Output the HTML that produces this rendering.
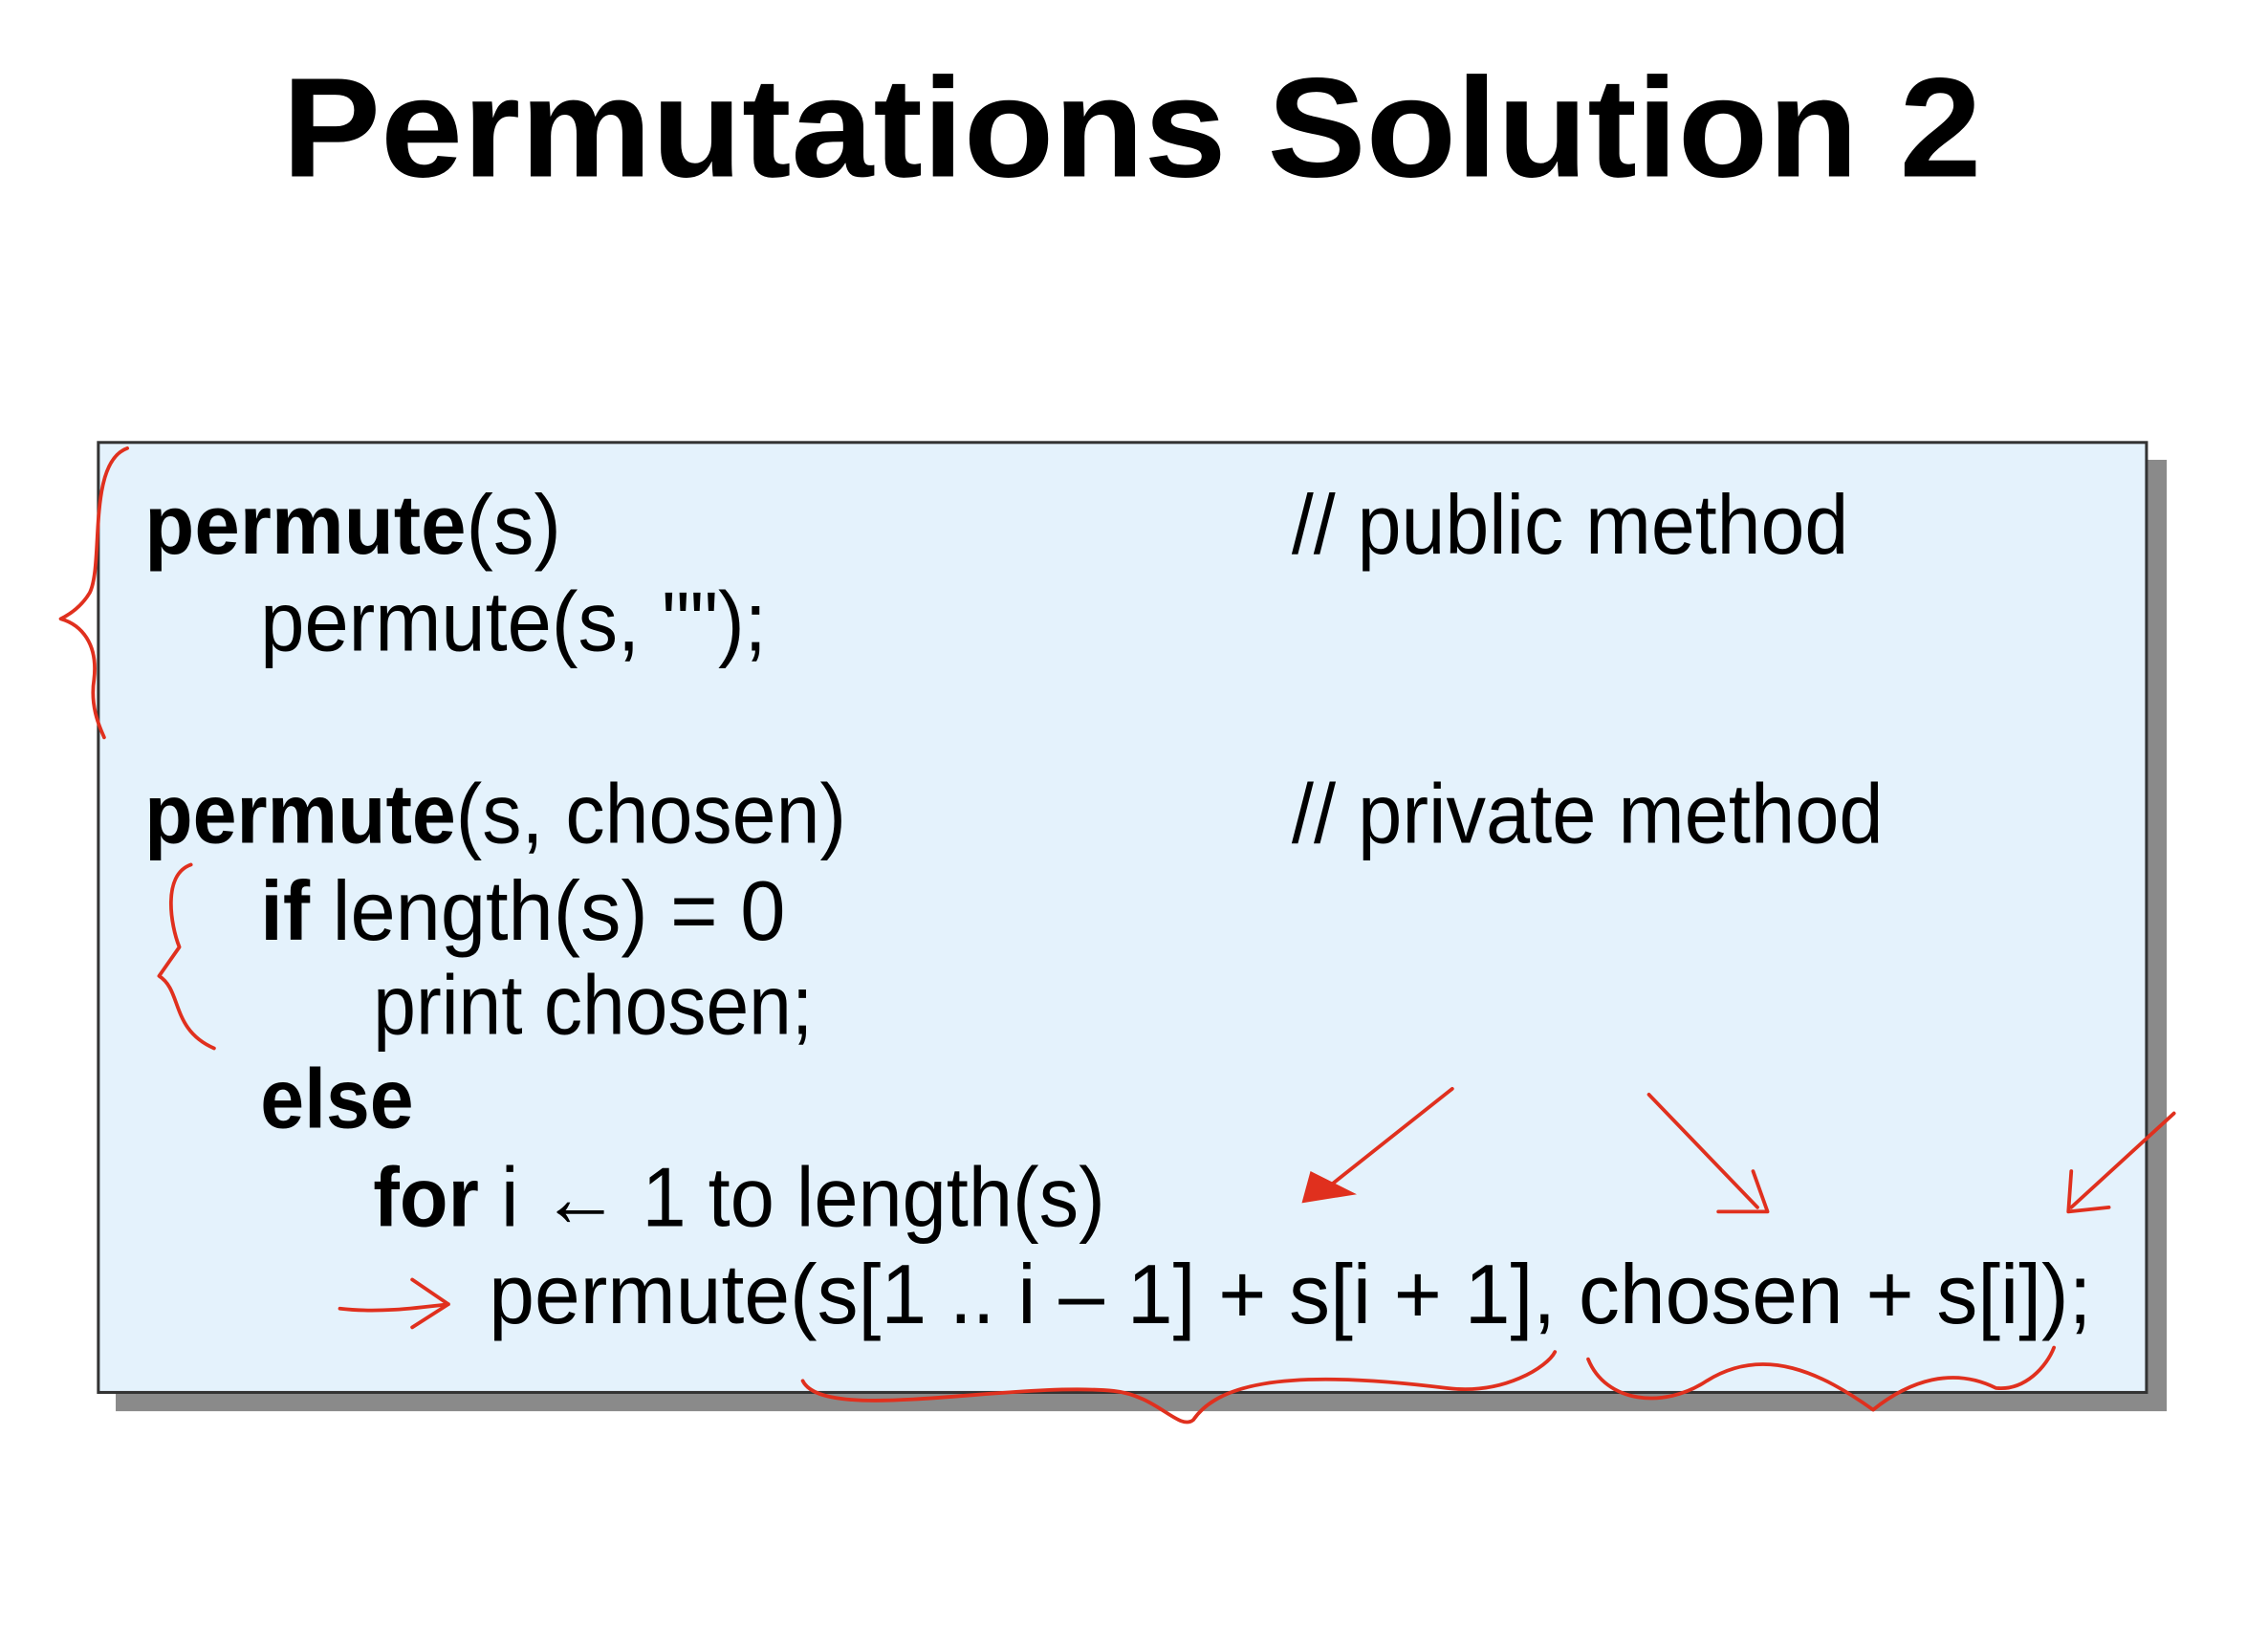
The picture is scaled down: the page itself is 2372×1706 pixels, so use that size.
<!DOCTYPE html>
<html><head><meta charset="utf-8"><style>
html,body{margin:0;padding:0;background:#fff;width:2372px;height:1706px;overflow:hidden}
svg{display:block}
text{font-family:"Liberation Sans",sans-serif;fill:#000}
</style></head><body>
<svg width="2372" height="1706" viewBox="0 0 1568 1128" preserveAspectRatio="none" xmlns="http://www.w3.org/2000/svg">
<rect width="1568" height="1128" fill="#fff"/>
<text x="195" y="122" font-size="98" font-weight="bold" textLength="1175" lengthAdjust="spacingAndGlyphs">Permutations Solution 2</text>
<rect x="80" y="318" width="1418" height="658" fill="#8a8a8a"/>
<rect x="68" y="306" width="1416" height="657" fill="#e4f2fc" stroke="#333" stroke-width="2"/>
<g font-size="58">
<text x="100" y="383" textLength="288" lengthAdjust="spacingAndGlyphs"><tspan font-weight="bold">permute</tspan>(s)</text>
<text x="180" y="450" textLength="350" lengthAdjust="spacingAndGlyphs">permute(s, "");</text>
<text x="893" y="383" textLength="385" lengthAdjust="spacingAndGlyphs">// public method</text>
<text x="100" y="583" textLength="485" lengthAdjust="spacingAndGlyphs"><tspan font-weight="bold">permute</tspan>(s, chosen)</text>
<text x="893" y="583" textLength="409" lengthAdjust="spacingAndGlyphs">// private method</text>
<text x="180" y="650" textLength="363" lengthAdjust="spacingAndGlyphs"><tspan font-weight="bold">if</tspan> length(s) = 0</text>
<text x="258" y="715" textLength="304" lengthAdjust="spacingAndGlyphs">print chosen;</text>
<text x="180" y="780" font-weight="bold" textLength="106" lengthAdjust="spacingAndGlyphs">else</text>
<text x="258" y="848" textLength="506" lengthAdjust="spacingAndGlyphs"><tspan font-weight="bold">for</tspan> i ← 1 to length(s)</text>
<text x="338" y="915" textLength="1108" lengthAdjust="spacingAndGlyphs">permute(s[1 .. i – 1] + s[i + 1], chosen + s[i]);</text>
</g>
<g fill="none" stroke="#e0301e" stroke-width="2.5" stroke-linecap="round" stroke-linejoin="round">
<path d="M88,310 C60,320 72,390 62,410 C56,420 48,425 42,428 C56,432 68,445 65,470 C62,490 70,505 72,510"/>
<path d="M132,598 C112,605 118,640 124,655 L110,675 C126,685 118,712 148,725"/>
<path d="M235,905 C260,908 285,905 310,902 M285,885 L310,902 L285,918"/>
<path d="M1004,753 L912,826"/>
<path d="M1140,757 L1215,835 M1188,838 L1222,838 L1212,810"/>
<path d="M1503,770 L1432,835 M1432,810 L1430,838 L1458,835"/>
<path d="M555,955 C570,985 700,955 770,962 C800,965 815,990 825,982 C840,960 880,945 1000,960 C1040,965 1070,945 1075,935"/>
<path d="M1098,940 C1110,970 1150,975 1180,955 C1220,930 1260,950 1295,975 C1320,955 1350,945 1380,960 C1400,962 1415,945 1420,932"/>
</g>
<path d="M900,832 L906,810 L938,826 Z" fill="#e0301e"/>
</svg>
</body></html>
